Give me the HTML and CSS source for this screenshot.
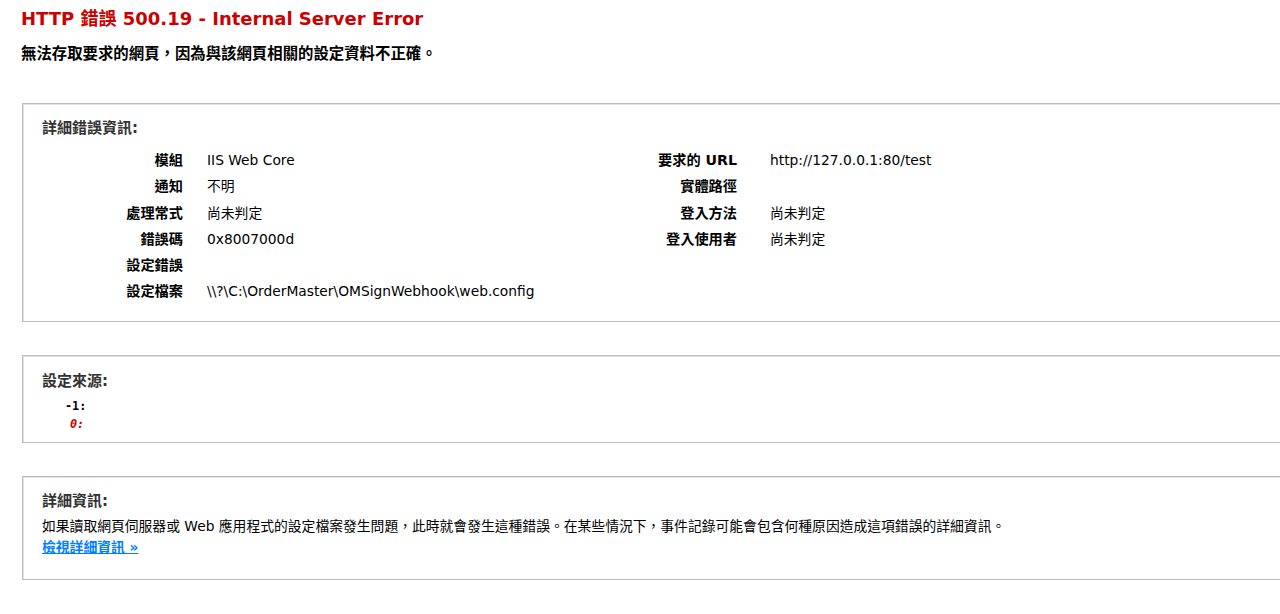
FILE: index.html
```html
<!DOCTYPE html>
<html lang="zh-Hant">
<head>
<meta charset="utf-8">
<title>IIS 10.0 詳細錯誤 - 500.19 - Internal Server Error</title>
<link rel="stylesheet" href="styles.css">
</head>
<body>
<div class="content">
  <h2 class="title">HTTP 錯誤 500.19 - Internal Server Error</h2>
  <h3 class="subtitle">無法存取要求的網頁，因為與該網頁相關的設定資料不正確。</h3>

  <section class="box box-details">
    <h4 class="legend">詳細錯誤資訊:</h4>
    <div class="details">
      <table class="details-left">
        <tr><th>模組</th><td>IIS Web Core</td></tr>
        <tr><th>通知</th><td>不明</td></tr>
        <tr><th>處理常式</th><td>尚未判定</td></tr>
        <tr><th>錯誤碼</th><td>0x8007000d</td></tr>
        <tr><th>設定錯誤</th><td></td></tr>
        <tr><th>設定檔案</th><td>\\?\C:\OrderMaster\OMSignWebhook\web.config</td></tr>
      </table>
      <table class="details-right">
        <tr><th>要求的 URL</th><td>http://127.0.0.1:80/test</td></tr>
        <tr><th>實體路徑</th><td></td></tr>
        <tr><th>登入方法</th><td>尚未判定</td></tr>
        <tr><th>登入使用者</th><td>尚未判定</td></tr>
      </table>
    </div>
  </section>

  <section class="box box-source">
    <h4 class="legend">設定來源:</h4>
    <div class="config-source">
      <code class="src-line src-first">-1:</code>
      <code class="src-line src-current">0:</code>
    </div>
  </section>

  <section class="box box-more">
    <h4 class="legend">詳細資訊:</h4>
    <p class="more-text">如果讀取網頁伺服器或 Web 應用程式的設定檔案發生問題，此時就會發生這種錯誤。在某些情況下，事件記錄可能會包含何種原因造成這項錯誤的詳細資訊。</p>
    <a class="more-link" href="#">檢視詳細資訊 »</a>
  </section>
</div>
</body>
</html>
```
FILE: styles.css
```css
html {
  overflow: hidden;
  background: #fff;
}
body {
  margin: 0;
  font-family: "DejaVu Sans", "Noto Sans CJK TC", sans-serif;
  font-size: 13.8px;
  color: #000;
}
.content {
  padding: 8px 0 0 21px;
}
.title {
  margin: 0;
  font-size: 18px;
  line-height: 22px;
  font-weight: bold;
  color: #cc0000;
}
.subtitle {
  margin: 13px 0 0 0;
  font-size: 15.4px;
  line-height: 22px;
  font-weight: bold;
  color: #000;
}
.box {
  width: 1300px;
  margin-left: 1px;
  border: 1px solid #bcbcbc;
  box-shadow: inset 1px 1px 0 #e4e4e4;
  padding: 15px 0 0 19px;
}
.box-details {
  margin-top: 38px;
  padding-bottom: 16px;
}
.box-source {
  margin-top: 33px;
  padding-top: 16px;
  padding-bottom: 9px;
}
.box-more {
  margin-top: 33px;
  padding-top: 15px;
  padding-bottom: 22px;
}
.legend {
  margin: 0;
  font-size: 15px;
  line-height: 18px;
  font-weight: bold;
  color: #333;
}
.details {
  display: flex;
  align-items: flex-start;
  margin-top: 10px;
}
table {
  border-collapse: collapse;
  border: none;
  table-layout: fixed;
}
th, td {
  padding: 3px 0;
  line-height: 20.3px;
  vertical-align: top;
  text-align: left;
  white-space: nowrap;
}
th {
  text-align: right;
  font-weight: bold;
  font-size: 14.2px;
  color: #000;
}
.details-left {
  width: 470px;
  flex: none;
}
.details-left th {
  width: 141px;
}
.details-left td {
  padding-left: 24px;
}
.details-right {
  width: 600px;
  flex: none;
}
.details-right th {
  width: 225px;
}
.details-right td {
  padding-left: 33px;
}
.config-source {
  margin-top: 7px;
}
.src-line {
  display: block;
  font-family: "DejaVu Sans Mono", monospace;
  font-size: 11.8px;
  line-height: 18px;
  font-weight: bold;
  color: #000;
}
.src-first {
  padding-left: 23px;
}
.src-current {
  padding-left: 28px;
  color: #cc0000;
  font-style: italic;
}
.more-text {
  margin: 6px 0 0 0;
  line-height: 20px;
}
.more-link {
  display: inline-block;
  margin-top: 1px;
  line-height: 20px;
  color: #007eff;
  font-weight: bold;
}
```
